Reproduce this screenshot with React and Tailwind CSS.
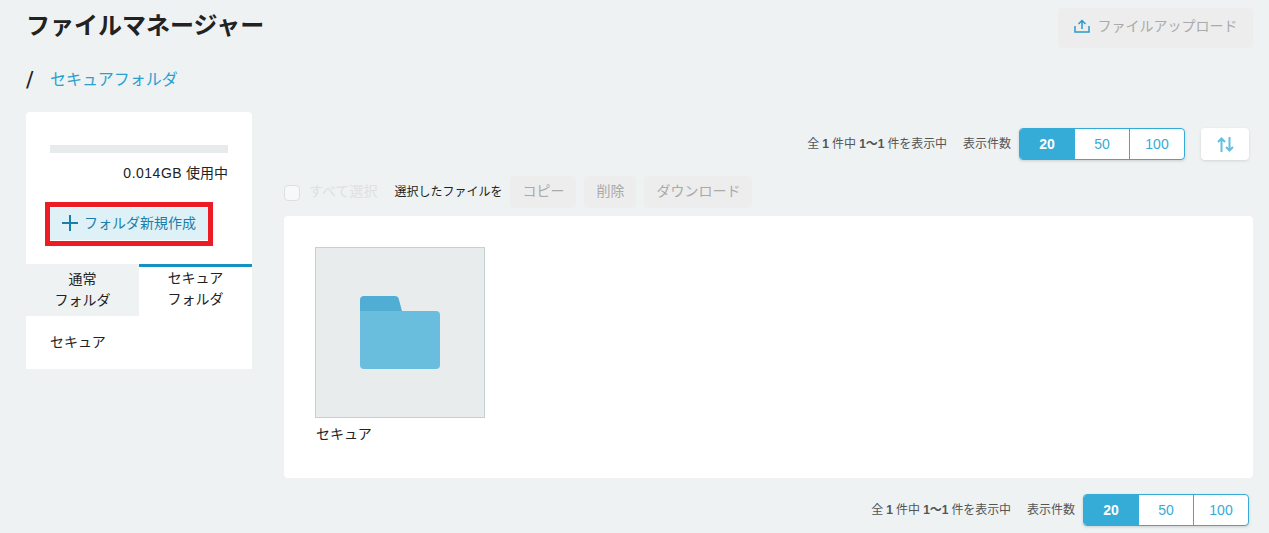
import { useState } from "react";

const fontStack = "font-['Liberation_Sans','Noto_Sans_CJK_JP',sans-serif]";

function Pager() {
  const [size, setSize] = useState(20);

  return (
    <div className="flex items-center text-[12px] text-[#555]">
      <span className="tracking-[-0.1px]">
        全 <b>1</b> 件中 <b>1〜1</b> 件を表示中
      </span>
      <span className="ml-4 mr-2">表示件数</span>
      <div className="flex h-8 w-[166px] overflow-hidden rounded border border-[#35abd7] bg-white text-[14px] shadow-[0_1px_3px_rgba(0,0,0,0.15)]">
        {[20, 50, 100].map((n) => (
          <button
            key={n}
            onClick={() => setSize(n)}
            className={
              n === size
                ? "w-[54px] bg-[#35abd7] font-bold text-white"
                : "flex-1 border-l border-[#35abd7] text-[#35abd7]"
            }
          >
            {n}
          </button>
        ))}
      </div>
    </div>
  );
}

function FolderIcon() {
  return (
    <svg width="80" height="73" viewBox="0 0 80 73">
      <path d="M0 4a4 4 0 0 1 4-4h31a4 4 0 0 1 3.500 2L42 15H0z" fill="#50adD3" />
      <path d="M0 15h76a4 4 0 0 1 4 4v50a4 4 0 0 1-4 4H4a4 4 0 0 1-4-4z" fill="#69bede" />
    </svg>
  );
}

export default function App() {
  const [tab, setTab] = useState("secure");

  return (
    <div className={`${fontStack} h-[533px] overflow-hidden bg-[#eef2f3] pl-[26px] pr-4 text-[#222]`}>
      <header className="flex items-start justify-between pt-2">
        <h1 className="mt-[3px] text-[24px] font-bold leading-[30px]">ファイルマネージャー</h1>
        <button className="flex h-10 w-[195px] items-center justify-center gap-2 rounded bg-[#ededed] pb-1 text-[14px] text-[#aaa]">
          <svg width="16" height="14" viewBox="0 0 16 14" fill="none" stroke="#2a9ac9" strokeWidth="1.500">
            <path d="M1 7v6h14V7" />
            <path d="M8 10V1.500M4.500 5 8 1.500 11.500 5" />
          </svg>
          ファイルアップロード
        </button>
      </header>

      <nav className="mt-[20px] flex h-6 items-center">
        <span className="w-[9px] font-['DejaVu_Sans',sans-serif] text-[22px] leading-none">/</span>
        <a href="#" className="ml-[15px] text-[16px] text-[#2a9fd0]">セキュアフォルダ</a>
      </nav>

      <div className="mt-[20px] flex gap-8">
        <aside className="h-[257px] w-[226px] shrink-0 rounded-t bg-white">
          <div className="px-6 pt-[33px]">
            <div className="h-2 bg-[#e8ebeb]" />
            <p className="mt-[10px] text-right text-[14px] leading-5">
              <span className="tracking-[0.5px]">0.014GB</span> 使用中
            </p>
          </div>
          <div className="ml-[19px] mt-[19px] w-[168px] border-[5px] border-[#ed1c24] bg-white py-px">
            <button className="flex h-[32px] w-full items-center gap-[6px] bg-[#def1f7] pb-[2px] pl-3 text-[14px] text-[#1b7ea8]">
              <svg width="16" height="16" viewBox="0 0 16 16" stroke="#1b7ea8" strokeWidth="2">
                <path d="M8 0v16M0 8h16" />
              </svg>
              フォルダ新規作成
            </button>
          </div>
          <div className="mt-[18px] grid grid-cols-2 text-center text-[14px] leading-[21px]">
            <button
              onClick={() => setTab("normal")}
              className="h-[52px] bg-[#eef2f3] pb-px"
            >
              通常<br />フォルダ
            </button>
            <button
              onClick={() => setTab("secure")}
              className="h-[52px] border-t-[3px] border-[#1492c4] bg-white pb-[6px]"
            >
              セキュア<br />フォルダ
            </button>
          </div>
          <p className="px-6 pt-4 text-[14px] leading-5">{tab === "secure" ? "セキュア" : ""}</p>
        </aside>

        <main className="w-[969px] pt-4">
          <div className="mr-1 flex h-8 items-center justify-end">
            <Pager />
            <button className="ml-4 flex h-8 w-12 items-center justify-center rounded bg-white shadow-[0_1px_3px_rgba(0,0,0,0.12)]">
              <svg width="17" height="15" viewBox="0 0 17 15" fill="none" stroke="#65bfe0" strokeWidth="2">
                <path d="M4.500 15V1.500M1 5l3.500-3.500L8 5" />
                <path d="M12.500 0v13.500M9 10l3.500 3.500L16 10" />
              </svg>
            </button>
          </div>

          <div className="mt-4 flex h-8 items-center">
            <span className="mt-px h-4 w-4 rounded-sm border border-[#dfdfdf] bg-[#f7f8f8]" />
            <span className="mb-[2px] ml-[9px] text-[14px] text-[#e0e0e0]">すべて選択</span>
            <span className="ml-[17px] text-[12px] text-[#222]">選択したファイルを</span>
            <button className="ml-2 h-8 w-[66px] rounded bg-[#ededed] pb-[2px] text-[14px] text-[#aaa]">コピー</button>
            <button className="ml-2 h-8 w-[52px] rounded bg-[#ededed] pb-[2px] text-[14px] text-[#aaa]">削除</button>
            <button className="ml-2 h-8 w-[108px] rounded bg-[#ededed] pb-[2px] text-[14px] text-[#aaa]">ダウンロード</button>
          </div>

          <section className="mt-2 h-[262px] rounded bg-white pl-[31px] pt-[31px]">
            <div className="flex h-[171px] w-[170px] items-center justify-center border border-[#c6d0d2] bg-[#e9ecec]">
              <FolderIcon />
            </div>
            <p className="mt-[6px] pl-px text-[14px] leading-5">セキュア</p>
          </section>

          <div className="mr-1 mt-4 flex justify-end">
            <Pager />
          </div>
        </main>
      </div>
    </div>
  );
}
